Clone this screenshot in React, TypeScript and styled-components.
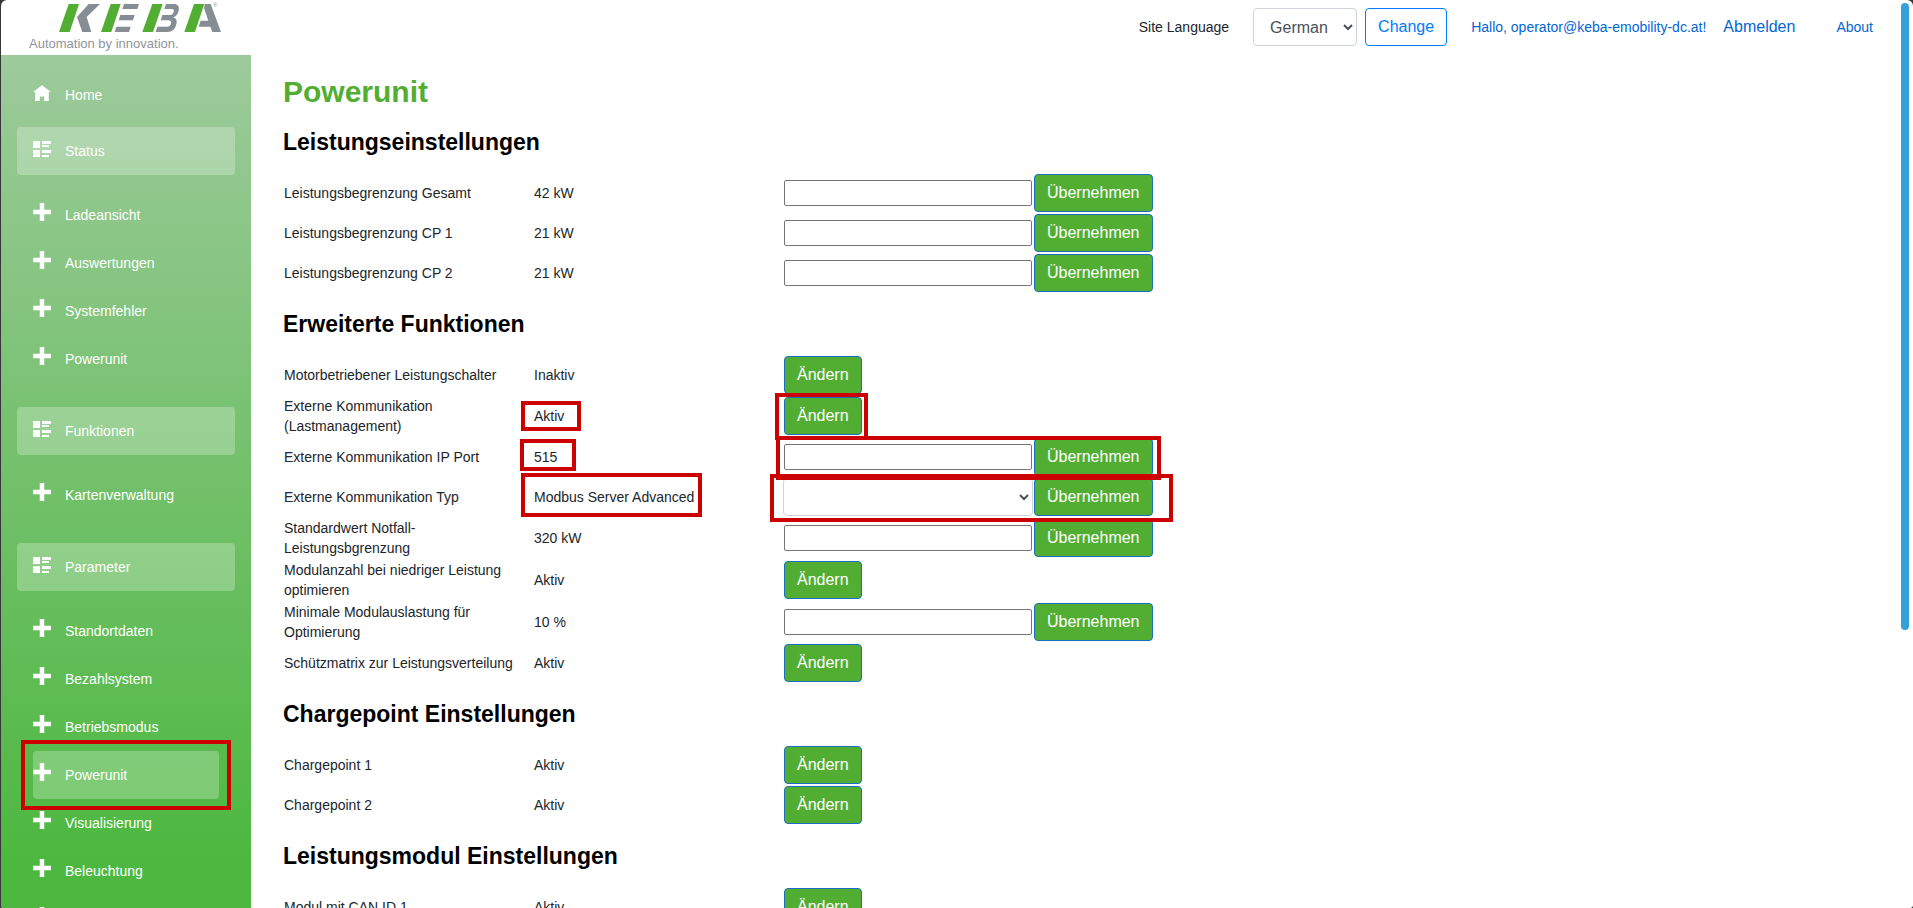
import React from 'react';
import styled, { createGlobalStyle, css } from 'styled-components';

const GlobalStyle = createGlobalStyle`
  *, *::before, *::after { box-sizing: border-box; }
  body {
    margin: 0;
    background: #36363a;
    color: #212529;
    font-family: "Liberation Sans", Arial, sans-serif;
    font-size: 14px;
    line-height: 20px;
  }
  button, input, select { font-family: inherit; }
`;

const Frame = styled.div`
  height: 100vh;
  padding-left: 1px;
  overflow: hidden;
`;

const Window = styled.div`
  position: relative;
  display: flex;
  height: 100%;
  overflow: hidden;
  background: #fff;
  border-radius: 6px 6px 3px 3px;
`;

const Sidebar = styled.aside`
  display: flex;
  flex-direction: column;
  flex: 0 0 250px;
  overflow: hidden;
`;

const Brand = styled.a`
  display: block;
  flex: 0 0 55px;
  padding-left: 28px;
  color: #8f9499;
  text-decoration: none;
`;

const LogoMark = styled.svg`
  display: block;
  width: 168px;
  height: 33px;
  margin-left: 24px;
`;

const Tagline = styled.span`
  display: block;
  font-size: 13px;
  line-height: 22px;
  white-space: nowrap;
`;

const Nav = styled.nav`
  flex: 1 0 auto;
  padding: 16px;
  background: linear-gradient(180deg, #9dca9b 0, #4db840 800px);
`;

const NavGroup = styled.section`
  margin-top: 8px;
`;

const NavList = styled.ul`
  margin: 0;
  padding: 16px;
  list-style: none;
`;

const NavLink = styled.a<{ $filled?: boolean; $sub?: boolean }>`
  position: relative;
  display: flex;
  align-items: center;
  height: 48px;
  padding: 0 ${(p) => (p.$sub ? 0 : 16)}px;
  border-radius: 4px;
  color: #fff;
  text-decoration: none;
  ${(p) =>
    p.$filled &&
    css`
      background: rgba(255, 255, 255, 0.25);
    `}
`;

const NavIcon = styled.svg`
  width: 18px;
  height: 18px;
  margin: 0 14px 6px 0;
  fill: #fff;
`;

const Content = styled.div`
  display: flex;
  flex: 1;
  flex-direction: column;
  min-width: 0;
`;

const TopBar = styled.header`
  display: flex;
  flex: 0 0 54px;
  align-items: center;
  justify-content: flex-end;
  padding-right: 40px;
`;

const LanguageForm = styled.form`
  display: flex;
  align-items: center;
  gap: 8px;
  margin-right: 24px;
`;

const LanguageLabel = styled.label`
  margin-right: 16px;
`;

const Select = styled.select`
  display: block;
  width: 100%;
  height: 38px;
  padding: 6px 12px;
  border: 1px solid #ced4da;
  border-radius: 4px;
  background: #fff;
  color: #495057;
  font-size: 16px;
  line-height: 24px;
`;

const LanguageSelect = styled(Select)`
  width: 104px;
`;

const Button = styled.button<{ $outline?: boolean }>`
  display: block;
  height: 38px;
  padding: 6px 12px;
  border: 1px solid ${(p) => (p.$outline ? '#007bff' : '#1b6ec2')};
  border-radius: 4px;
  background: ${(p) => (p.$outline ? '#fff' : '#52ae32')};
  color: ${(p) => (p.$outline ? '#007bff' : '#fff')};
  font-size: 16px;
  line-height: 24px;
`;

const Account = styled.div`
  display: flex;
  align-items: center;
  gap: 17px;
  margin-right: 41px;
`;

const TextLink = styled.a<{ $large?: boolean }>`
  color: #0366d6;
  font-size: ${(p) => (p.$large ? 16 : 14)}px;
  text-decoration: none;
`;

const Main = styled.main`
  flex: 1;
  min-height: 0;
  padding: 20px 32px;
  overflow-y: auto;
  scrollbar-width: none;
`;

const Title = styled.h1`
  margin: 0 0 18px;
  color: #52ae32;
  font-size: 30px;
  line-height: 36px;
`;

const Heading = styled.h2`
  margin: 17px 0;
  color: #000;
  font-size: 23px;
  line-height: 28px;
`;

const Table = styled.table`
  table-layout: fixed;
  width: 871px;
  max-width: 100%;
  border-collapse: collapse;
`;

const WideCol = styled.col`
  width: 250px;
`;

const Cell = styled.td<{ $flush?: boolean }>`
  position: relative;
  height: 40px;
  padding: ${(p) => (p.$flush ? 0 : 1)}px;
  vertical-align: middle;
`;

const TextInput = styled.input`
  display: block;
  width: 100%;
  height: 26px;
  border: 1px solid #767676;
  border-radius: 2px;
  background: #fff;
  font-size: 14px;
`;

interface Box {
  top: number;
  left: number;
  width: number;
  height: number;
}

const Marker = styled.span<{ $box: Box }>`
  position: absolute;
  z-index: 1;
  top: ${(p) => p.$box.top}px;
  left: ${(p) => p.$box.left}px;
  width: ${(p) => p.$box.width}px;
  height: ${(p) => p.$box.height}px;
  border: 4px solid #c00;
  pointer-events: none;
`;

const ScrollThumb = styled.div`
  position: absolute;
  z-index: 2;
  top: 3px;
  right: 4px;
  width: 8px;
  height: 69%;
  border-radius: 4px;
  background: #36a0da;
`;

const icons = {
  home: { viewBox: '0 -1 8 8', d: 'M4 0l-4 3h1v4h2v-2h2v2h2v-4.03l1 .03-4-3z' },
  list: {
    viewBox: '0 0 18 18',
    d: 'M0 2h7v7h-7zM9 2h9v3h-9zM9 6h7v2h-7zM0 11h7v7h-7zM9 11h9v3h-9zM9 16h7v2h-7z',
  },
  plus: { viewBox: '0 0 8 8', d: 'M3 0v3h-3v2h3v3h2v-3h3v-2h-3v-3h-2z' },
};

const Icon = ({ name }: { name: keyof typeof icons }) => (
  <NavIcon viewBox={icons[name].viewBox} aria-hidden="true">
    <path d={icons[name].d} />
  </NavIcon>
);

const Logo = () => (
  <LogoMark viewBox="159 0 504 99" role="img" aria-label="KEBA">
    <g fill="#52ae32">
      <path d="M206 12h31l-28 84h-32z" />
      <path d="M332 12h30l-28 84h-31z" />
      <path d="M457 12h31l-29 84h-32z" />
      <path d="M582 12h31l-28 84h-32z" />
    </g>
    <g fill="#868d93">
      <path d="M266 12h34l-40 39 14 45h-27l-16-45z" />
      <path d="M372 12h45l-5 15h-45z" />
      <path d="M361 45h43l-5 16h-43z" />
      <path d="M349 80h43l-5 16h-43z" />
      <path d="M498 12h22c14 0 19 8 16 20-3 11-8 17-16 20 9 3 12 10 9 21-4 16-13 23-27 23h-35l5-16h29c7 0 10-3 12-9s-1-10-8-10h-23l5-16h23c6 0 9-3 11-9s0-9-6-9h-22z" />
      <path d="M615 12h17l31 84h-26l-6-16h-35l6-18h23l-13-38z" />
    </g>
    <text x="640" y="22" fontSize="16" fill="#868d93">®</text>
  </LogoMark>
);

interface NavGroupData {
  title: string;
  items: { label: string; active?: boolean }[];
}

const navGroups: NavGroupData[] = [
  {
    title: 'Status',
    items: [
      { label: 'Ladeansicht' },
      { label: 'Auswertungen' },
      { label: 'Systemfehler' },
      { label: 'Powerunit' },
    ],
  },
  { title: 'Funktionen', items: [{ label: 'Kartenverwaltung' }] },
  {
    title: 'Parameter',
    items: [
      { label: 'Standortdaten' },
      { label: 'Bezahlsystem' },
      { label: 'Betriebsmodus' },
      { label: 'Powerunit', active: true },
      { label: 'Visualisierung' },
      { label: 'Beleuchtung' },
      { label: 'Netzwerk' },
    ],
  },
];

interface Setting {
  label: string;
  value: string;
  control: 'toggle' | 'text' | 'select';
  valueMark?: Box;
  controlMark?: Box;
}

const sections: { title: string; settings: Setting[] }[] = [
  {
    title: 'Leistungseinstellungen',
    settings: [
      { label: 'Leistungsbegrenzung Gesamt', value: '42 kW', control: 'text' },
      { label: 'Leistungsbegrenzung CP 1', value: '21 kW', control: 'text' },
      { label: 'Leistungsbegrenzung CP 2', value: '21 kW', control: 'text' },
    ],
  },
  {
    title: 'Erweiterte Funktionen',
    settings: [
      { label: 'Motorbetriebener Leistungschalter', value: 'Inaktiv', control: 'toggle' },
      {
        label: 'Externe Kommunikation (Lastmanagement)',
        value: 'Aktiv',
        control: 'toggle',
        valueMark: { top: 6, left: -12, width: 60, height: 30 },
        controlMark: { top: -2, left: -8, width: 93, height: 47 },
      },
      {
        label: 'Externe Kommunikation IP Port',
        value: '515',
        control: 'text',
        valueMark: { top: 2, left: -13, width: 56, height: 32 },
        controlMark: { top: -1, left: -7, width: 385, height: 44 },
      },
      {
        label: 'Externe Kommunikation Typ',
        value: 'Modbus Server Advanced',
        control: 'select',
        valueMark: { top: -4, left: -12, width: 181, height: 44 },
        controlMark: { top: -3, left: -13, width: 403, height: 48 },
      },
      { label: 'Standardwert Notfall-Leistungsbgrenzung', value: '320 kW', control: 'text' },
      { label: 'Modulanzahl bei niedriger Leistung optimieren', value: 'Aktiv', control: 'toggle' },
      { label: 'Minimale Modulauslastung für Optimierung', value: '10 %', control: 'text' },
      { label: 'Schützmatrix zur Leistungsverteilung', value: 'Aktiv', control: 'toggle' },
    ],
  },
  {
    title: 'Chargepoint Einstellungen',
    settings: [
      { label: 'Chargepoint 1', value: 'Aktiv', control: 'toggle' },
      { label: 'Chargepoint 2', value: 'Aktiv', control: 'toggle' },
    ],
  },
  {
    title: 'Leistungsmodul Einstellungen',
    settings: [{ label: 'Modul mit CAN ID 1', value: 'Aktiv', control: 'toggle' }],
  },
];

const SettingRow = ({ setting, id }: { setting: Setting; id: string }) => {
  const { label, value, control, valueMark, controlMark } = setting;
  return (
    <tr>
      <Cell>
        <label htmlFor={id}>{label}</label>
      </Cell>
      <Cell>
        {value}
        {valueMark && <Marker $box={valueMark} />}
      </Cell>
      <Cell $flush={control === 'select'}>
        {control === 'toggle' && (
          <Button type="button" id={id}>
            Ändern
          </Button>
        )}
        {control === 'text' && <TextInput type="text" id={id} />}
        {control === 'select' && (
          <Select id={id} defaultValue="">
            <option value="" />
            <option value="advanced">Modbus Server Advanced</option>
          </Select>
        )}
        {controlMark && <Marker $box={controlMark} />}
      </Cell>
      <Cell>{control !== 'toggle' && <Button type="button">Übernehmen</Button>}</Cell>
    </tr>
  );
};

export default function App() {
  return (
    <Frame>
      <GlobalStyle />
      <Window>
        <Sidebar>
          <Brand href="#">
            <Logo />
            <Tagline>Automation by innovation.</Tagline>
          </Brand>
          <Nav>
            <NavLink href="#">
              <Icon name="home" />
              Home
            </NavLink>
            {navGroups.map((group) => (
              <NavGroup key={group.title}>
                <NavLink href="#" $filled>
                  <Icon name="list" />
                  {group.title}
                </NavLink>
                <NavList>
                  {group.items.map((item) => (
                    <li key={item.label}>
                      <NavLink href="#" $sub $filled={item.active}>
                        <Icon name="plus" />
                        {item.label}
                        {item.active && <Marker $box={{ top: -11, left: -12, width: 210, height: 70 }} />}
                      </NavLink>
                    </li>
                  ))}
                </NavList>
              </NavGroup>
            ))}
          </Nav>
        </Sidebar>
        <Content>
          <TopBar>
            <LanguageForm>
              <LanguageLabel htmlFor="site-language">Site Language</LanguageLabel>
              <LanguageSelect id="site-language" defaultValue="de">
                <option value="de">German</option>
                <option value="en">English</option>
              </LanguageSelect>
              <Button type="button" $outline>
                Change
              </Button>
            </LanguageForm>
            <Account>
              <TextLink href="#">Hallo, operator@keba-emobility-dc.at!</TextLink>
              <TextLink href="#" $large>
                Abmelden
              </TextLink>
            </Account>
            <TextLink href="#">About</TextLink>
          </TopBar>
          <Main>
            <Title>Powerunit</Title>
            {sections.map((section, s) => (
              <section key={section.title}>
                <Heading>{section.title}</Heading>
                <Table>
                  <colgroup>
                    <WideCol />
                    <WideCol />
                    <WideCol />
                    <col />
                  </colgroup>
                  <tbody>
                    {section.settings.map((setting, i) => (
                      <SettingRow key={setting.label} setting={setting} id={`setting-${s}-${i}`} />
                    ))}
                  </tbody>
                </Table>
              </section>
            ))}
          </Main>
        </Content>
        <ScrollThumb />
      </Window>
    </Frame>
  );
}
